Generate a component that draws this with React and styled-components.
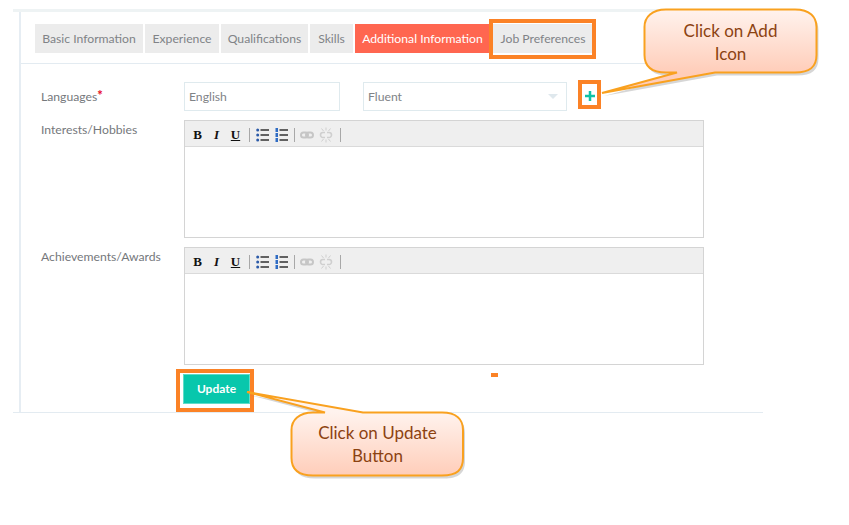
import React from "react";
import styled, { createGlobalStyle } from "styled-components";

const Global = createGlobalStyle`
  html, body { margin: 0; padding: 0; background: #fff; }
  body { font-family: "Lato", "Open Sans", sans-serif; }
`;
const Page = styled.div`
  position: relative;
  width: 849px;
  height: 525px;
  overflow: hidden;
  padding-top: 9px;
  box-sizing: border-box;
`;
const Panel = styled.div`
  width: 750px;
  margin-left: 13px;
  border-top: 3px solid #eef3f4;
  border-bottom: 1px solid #e3ebf1;
  padding-left: 6px;
  box-sizing: border-box;
`;
const Inner = styled.div`
  border-left: 2px solid #e6edf3;
  height: 400px;
  box-sizing: border-box;
`;
const TabBar = styled.div`
  display: flex;
  gap: 2px;
  height: 52px;
  padding: 12px 0 0 14px;
  box-sizing: border-box;
  border-bottom: 1px solid #e3ebf1;
`;
const Tab = styled.div`
  position: relative;
  width: ${(p) => p.$w}px;
  height: 29px;
  margin-left: ${(p) => p.$ml || 0}px;
  background: ${(p) => (p.$active ? "#ff6650" : "#ececec")};
  color: ${(p) => (p.$active ? "#fff" : "#808387")};
  font-size: 12.2px;
  line-height: 29px;
  text-align: center;
  white-space: nowrap;
  ${(p) =>
    p.$marked &&
    `&::after {
      content: "";
      position: absolute;
      left: -4px;
      top: -5px;
      width: 107px;
      height: 40px;
      box-sizing: border-box;
      border: 4px solid #fb8226;
    }`}
`;
const Form = styled.div`
  display: grid;
  grid-template-columns: 143px 520px;
  padding: 18px 0 0 20px;
  row-gap: 9px;
`;
const Label = styled.div`
  font-size: 12.2px;
  color: #75787c;
  padding-top: ${(p) => p.$top}px;
  line-height: 16px;
  white-space: nowrap;
`;
const Star = styled.span`
  color: #e8112d;
  font-weight: 900;
  font-size: 13px;
  line-height: 10px;
  vertical-align: 1px;
`;
const LangRow = styled.div`
  display: flex;
  align-items: flex-start;
  height: 29px;
`;
const Field = styled.div`
  width: ${(p) => p.$w}px;
  height: 29px;
  margin-right: ${(p) => p.$mr}px;
  border: 1px solid #dfeaee;
  box-sizing: border-box;
  padding: 0 0 0 ${(p) => p.$pl}px;
  display: flex;
  align-items: center;
  justify-content: space-between;
  font-size: 12.2px;
  color: #808387;
`;
const Caret = styled.span`
  width: 0;
  height: 0;
  margin-right: 8px;
  border-left: 5.5px solid transparent;
  border-right: 5.5px solid transparent;
  border-top: 5px solid #dfe8ed;
`;
const AddBox = styled.div`
  width: 23px;
  height: 29px;
  margin-top: -2px;
  padding-top: 2px;
  box-sizing: border-box;
  border: 4px solid #fb8226;
  display: flex;
  align-items: center;
  justify-content: center;
`;
const Editor = styled.div`
  width: 520px;
  height: 118px;
  box-sizing: border-box;
  border: 1px solid #d4d4d4;
  background: #fff;
`;
const Toolbar = styled.div`
  height: 26px;
  background: #efefef;
  border-bottom: 1px solid #dadada;
  display: flex;
  align-items: center;
  padding: 2px 0 0 3px;
  box-sizing: border-box;
`;
const Fmt = styled.span`
  width: 19px;
  font-family: "Liberation Serif", serif;
  font-weight: 700;
  font-size: 13px;
  color: #111;
  text-align: center;
  font-style: ${(p) => (p.$i ? "italic" : "normal")};
  text-decoration: ${(p) => (p.$u ? "underline" : "none")};
`;
const Sep = styled.span`
  width: 1px;
  height: 14px;
  margin-left: ${(p) => p.$l}px;
  margin-right: ${(p) => p.$r}px;
  background: #a8a8a8;
`;
const Icon = styled.svg`
  display: block;
  margin-right: ${(p) => p.$mr || 0}px;
  flex: none;
`;
const ButtonRow = styled.div`
  grid-column: 2;
  margin-left: -1px;
`;
const UpdateButton = styled.div`
  position: relative;
  width: 67px;
  height: 30px;
  background: #08c7ac;
  color: #fff;
  font-size: 12px;
  font-weight: 700;
  line-height: 30px;
  text-align: center;
  box-shadow: inset 0 0 0 1px #5fdcc9;
  &::after {
    content: "";
    position: absolute;
    left: -7px;
    top: -5px;
    width: 78px;
    height: 43px;
    box-sizing: border-box;
    border: 4px solid #fb8226;
  }
`;
const Dash = styled.div`
  position: absolute;
  left: 491px;
  top: 373px;
  width: 7px;
  height: 4px;
  background: #fb8226;
`;
const Callout = styled.div`
  position: absolute;
  left: ${(p) => p.$x}px;
  top: ${(p) => p.$y}px;
  width: 173px;
  height: 64px;
  display: flex;
  align-items: center;
  justify-content: center;
  text-align: center;
  font-size: 17px;
  line-height: 23px;
  color: #8c4211;
`;
const CalloutShape = styled.svg`
  position: absolute;
  left: 0;
  top: 0;
  overflow: visible;
`;
const CalloutText = styled.div`
  position: relative;
  width: ${(p) => p.$w}px;
  margin-top: ${(p) => p.$mt}px;
`;

const ListIcon = ({ numbered, mr }) => (
  <Icon width="13" height="14" viewBox="0 0 13 14" $mr={mr}>
    {[2, 7, 12].map((y) =>
      numbered ? (
        <rect key={y} x="0.5" y={y - 2} width="2.5" height="4" fill="#2f6cc4" />
      ) : (
        <circle key={y} cx="1.7" cy={y} r="1.5" fill="#2b5aa8" />
      )
    )}
    {[2, 7, 12].map((y) => (
      <rect key={y} x="4.5" y={y - 0.75} width="8.5" height="1.5" fill="#333" />
    ))}
  </Icon>
);

const LinkIcon = () => (
  <Icon width="14" height="10" viewBox="0 0 14 10" $mr={5}>
    <g fill="none" stroke="#c6c6c6" strokeWidth="2">
      <rect x="1" y="2.5" width="7" height="5" rx="2.5" />
      <rect x="6" y="2.5" width="7" height="5" rx="2.5" />
    </g>
  </Icon>
);

const UnlinkIcon = () => (
  <Icon width="14" height="16" viewBox="0 0 14 16" $mr={7}>
    <g fill="none" stroke="#cfcfcf" strokeWidth="1.6">
      <path d="M6 5.5H4a2.5 2.5 0 0 0 0 5h2" />
      <path d="M8 5.5h2a2.5 2.5 0 0 1 0 5H8" />
      <path d="M7 0.5v3M7 12.5v3M2.5 1.5l2 2.5M11.5 1.5L9.5 4M2.5 14.5l2-2.5M11.5 14.5L9.5 12" strokeWidth="1" />
    </g>
  </Icon>
);

const EditorBox = () => (
  <Editor>
    <Toolbar>
      <Fmt>B</Fmt>
      <Fmt $i>I</Fmt>
      <Fmt $u>U</Fmt>
      <Sep $l={4} $r={6} />
      <ListIcon mr={6} />
      <ListIcon numbered mr={6} />
      <Sep $l={0} $r={5} />
      <LinkIcon />
      <UnlinkIcon />
      <Sep $l={0} $r={0} />
    </Toolbar>
  </Editor>
);

const Bubble = ({ id, path, x, y, w, mt, children }) => (
  <Callout $x={x} $y={y}>
    <CalloutShape width="173" height="64">
      <defs>
        <linearGradient id={id} gradientUnits="userSpaceOnUse" x1="0" y1="0" x2="0" y2="64">
          <stop offset="0" stopColor="#fff3ee" />
          <stop offset="1" stopColor="#ffcdb9" />
        </linearGradient>
      </defs>
      <path d={path} fill="#8a8a8a" opacity="0.35" transform="translate(2 3)" />
      <path d={path} fill={`url(#${id})`} stroke="#f9a11f" strokeWidth="2" />
    </CalloutShape>
    <CalloutText $w={w} $mt={mt}>{children}</CalloutText>
  </Callout>
);

const topPath =
  "M22 0.5H151C166 0.5 172.5 8 172.5 18V46C172.5 58 166 63.5 151 63.5H71L-42 84L33 63.5H22C8 63.5 0.5 58 0.5 46V18C0.5 8 8 0.5 22 0.5Z";
const bottomPath =
  "M22 0.5H34L-44 -20L72 0.5H151C166 0.5 172 8 172 18V46C172 58 166 63.5 151 63.5H22C8 63.5 0.5 58 0.5 46V18C0.5 8 8 0.5 22 0.5Z";

export default function App() {
  return (
    <Page>
      <Global />
      <Panel>
        <Inner>
          <TabBar>
            <Tab $w={108}>Basic Information</Tab>
            <Tab $w={74}>Experience</Tab>
            <Tab $w={87}>Qualifications</Tab>
            <Tab $w={43}>Skills</Tab>
            <Tab $w={135} $active>Additional Information</Tab>
            <Tab $w={100} $ml={1} $marked>Job Preferences</Tab>
          </TabBar>
          <Form>
            <Label $top={7}>Languages<Star>*</Star></Label>
            <LangRow>
              <Field $w={156} $mr={23} $pl={4}>English</Field>
              <Field $w={204} $mr={11} $pl={4}>
                Fluent
                <Caret />
              </Field>
              <AddBox>
                <Icon width="10" height="10" viewBox="0 0 10 10">
                  <path d="M3.75 0h2.5v3.75H10v2.5H6.25V10h-2.5V6.25H0v-2.5h3.75z" fill="#0fc2a6" />
                </Icon>
              </AddBox>
            </LangRow>
            <Label $top={2}>Interests/Hobbies</Label>
            <EditorBox />
            <Label $top={2}>Achievements/Awards</Label>
            <EditorBox />
            <ButtonRow>
              <UpdateButton>Update</UpdateButton>
            </ButtonRow>
          </Form>
        </Inner>
      </Panel>
      <Dash />
      <Bubble id="g1" path={topPath} x={644} y={9} w={110} mt={1}>Click on Add Icon</Bubble>
      <Bubble id="g2" path={bottomPath} x={291} y={412} w={130} mt={0}>Click on Update Button</Bubble>
    </Page>
  );
}
